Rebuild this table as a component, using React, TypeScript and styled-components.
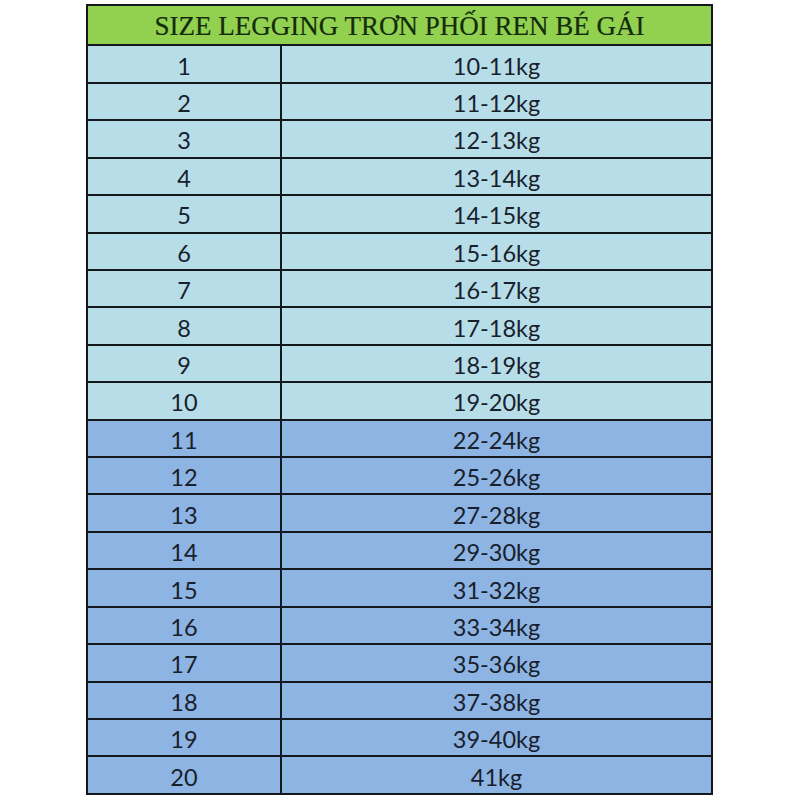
import React from "react";
import styled, { createGlobalStyle } from "styled-components";

const GlobalStyle = createGlobalStyle`
  html, body {
    margin: 0;
    padding: 0;
    background: #ffffff;
  }
`;

const Page = styled.div`
  width: 800px;
  height: 800px;
  padding: 4px 0 0 86px;
  box-sizing: border-box;
`;

const Table = styled.div`
  width: 627px;
  height: 791px;
  box-sizing: border-box;
  border: 2px solid #14181c;
  display: flex;
  flex-direction: column;
`;

const Header = styled.div`
  flex: 1;
  background: #92d050;
  display: flex;
  align-items: center;
  justify-content: center;
  font-family: "Liberation Serif", "DejaVu Serif", serif;
  font-size: 27px;
  color: #142c0a;
  padding-top: 3px;
  -webkit-text-stroke: 0.2px #142c0a;
`;

const Row = styled.div<{ $dark: boolean }>`
  flex: 1;
  display: grid;
  grid-template-columns: 192px 1fr;
  border-top: 2px solid #14181c;
  background: ${p => (p.$dark ? "#8db4e2" : "#b7dee8")};
`;

const Cell = styled.div<{ $divider?: boolean }>`
  display: flex;
  align-items: center;
  justify-content: center;
  font-family: "Lato", "Open Sans", sans-serif;
  font-size: 23.5px;
  color: #18202c;
  padding-top: 3px;
  border-left: ${p => (p.$divider ? "2px solid #14181c" : "none")};
`;

const sizes = [
  "10-11kg",
  "11-12kg",
  "12-13kg",
  "13-14kg",
  "14-15kg",
  "15-16kg",
  "16-17kg",
  "17-18kg",
  "18-19kg",
  "19-20kg",
  "22-24kg",
  "25-26kg",
  "27-28kg",
  "29-30kg",
  "31-32kg",
  "33-34kg",
  "35-36kg",
  "37-38kg",
  "39-40kg",
  "41kg",
];

const App = () => {
  return (
    <Page>
      <GlobalStyle />
      <Table>
        <Header>SIZE LEGGING TRƠN PHỐI REN BÉ GÁI</Header>
        {sizes.map((w, i) => (
          <Row key={i} $dark={i >= 10}>
            <Cell>{i + 1}</Cell>
            <Cell $divider>{w}</Cell>
          </Row>
        ))}
      </Table>
    </Page>
  );
};

export default App;
